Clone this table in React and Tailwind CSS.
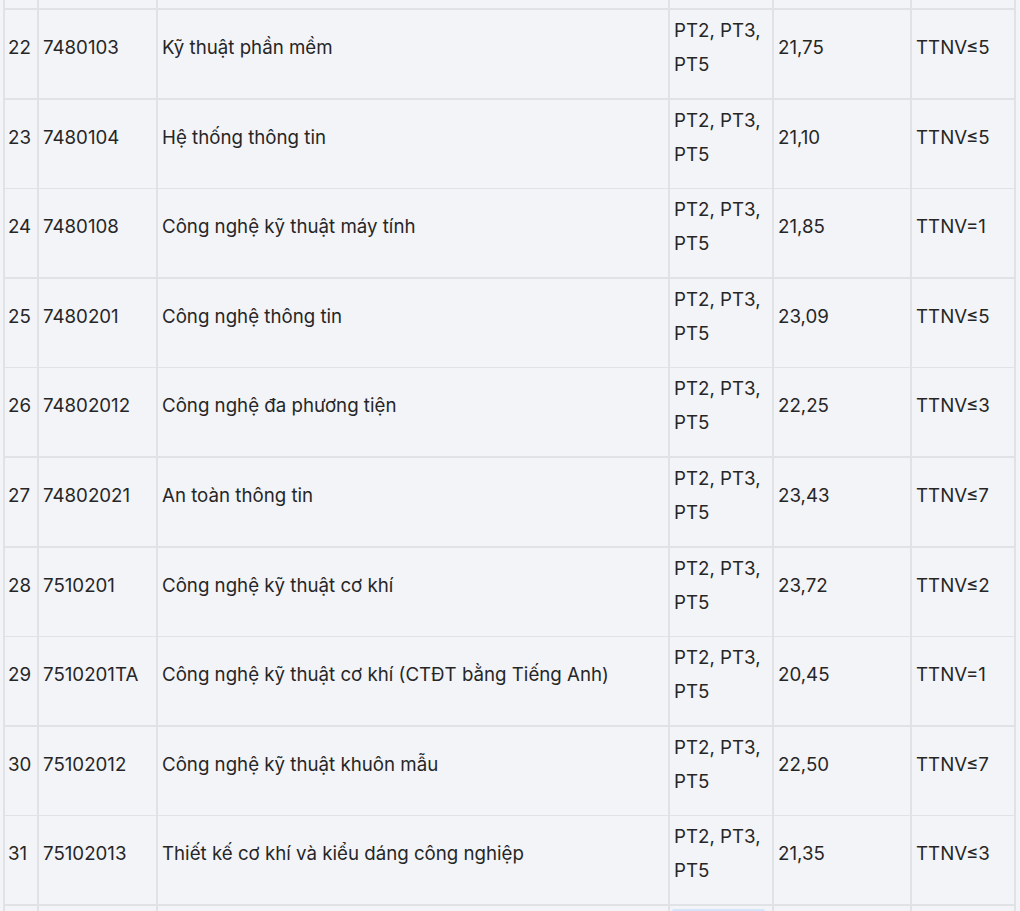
const rows = [
  ["22", "7480103", "Kỹ thuật phần mềm", "PT2, PT3, PT5", "21,75", "TTNV≤5"],
  ["23", "7480104", "Hệ thống thông tin", "PT2, PT3, PT5", "21,10", "TTNV≤5"],
  ["24", "7480108", "Công nghệ kỹ thuật máy tính", "PT2, PT3, PT5", "21,85", "TTNV=1"],
  ["25", "7480201", "Công nghệ thông tin", "PT2, PT3, PT5", "23,09", "TTNV≤5"],
  ["26", "74802012", "Công nghệ đa phương tiện", "PT2, PT3, PT5", "22,25", "TTNV≤3"],
  ["27", "74802021", "An toàn thông tin", "PT2, PT3, PT5", "23,43", "TTNV≤7"],
  ["28", "7510201", "Công nghệ kỹ thuật cơ khí", "PT2, PT3, PT5", "23,72", "TTNV≤2"],
  ["29", "7510201TA", "Công nghệ kỹ thuật cơ khí (CTĐT bằng Tiếng Anh)", "PT2, PT3, PT5", "20,45", "TTNV=1"],
  ["30", "75102012", "Công nghệ kỹ thuật khuôn mẫu", "PT2, PT3, PT5", "22,50", "TTNV≤7"],
  ["31", "75102013", "Thiết kế cơ khí và kiểu dáng công nghiệp", "PT2, PT3, PT5", "21,35", "TTNV≤3"],
];

const cols = "grid h-[87.6px] grid-cols-[32px_117px_510px_102px_136px_102px] gap-x-[2px]";

function Cell({ children, first }) {
  return (
    <div
      className={
        "flex items-center bg-[#f3f4f8] pt-[4px] pb-[16px] " +
        (first ? "pl-[3px] pr-0" : "pl-[4px] pr-[4px]")
      }
    >
      <div className="whitespace-nowrap">{children}</div>
    </div>
  );
}

function Row({ r }) {
  const [no, code, name, , score, note] = r;
  return (
    <div className={cols}>
      <Cell first>{no}</Cell>
      <Cell>{code}</Cell>
      <Cell>{name}</Cell>
      <Cell>
        PT2, PT3,
        <br />
        PT5
      </Cell>
      <Cell>{score}</Cell>
      <Cell>{note}</Cell>
    </div>
  );
}

function EmptyRow({ children }) {
  return (
    <div className={cols}>
      <div className="bg-[#f3f4f8]" />
      <div className="bg-[#f3f4f8]" />
      <div className="bg-[#f3f4f8]" />
      <div className="bg-[#f3f4f8] pt-[3px] pl-[2px]">{children}</div>
      <div className="bg-[#f3f4f8]" />
      <div className="bg-[#f3f4f8]" />
    </div>
  );
}

export default function App() {
  return (
    <div className="h-[911px] w-[1020px] overflow-hidden bg-[#f3f4f8] pl-[3px] font-['Inter',sans-serif] text-[18.7px] leading-[34px] text-[#262626]">
      <div className="-mt-[79.6px] flex w-[1013px] flex-col gap-y-[2px] bg-[#e1e2e6] px-[2px]">
        <EmptyRow />
        {rows.map((r) => (
          <Row key={r[0]} r={r} />
        ))}
        <EmptyRow>
          <div className="h-[30px] w-[93px] rounded-t-[2px] bg-[#d4e5fb]" />
        </EmptyRow>
      </div>
    </div>
  );
}
